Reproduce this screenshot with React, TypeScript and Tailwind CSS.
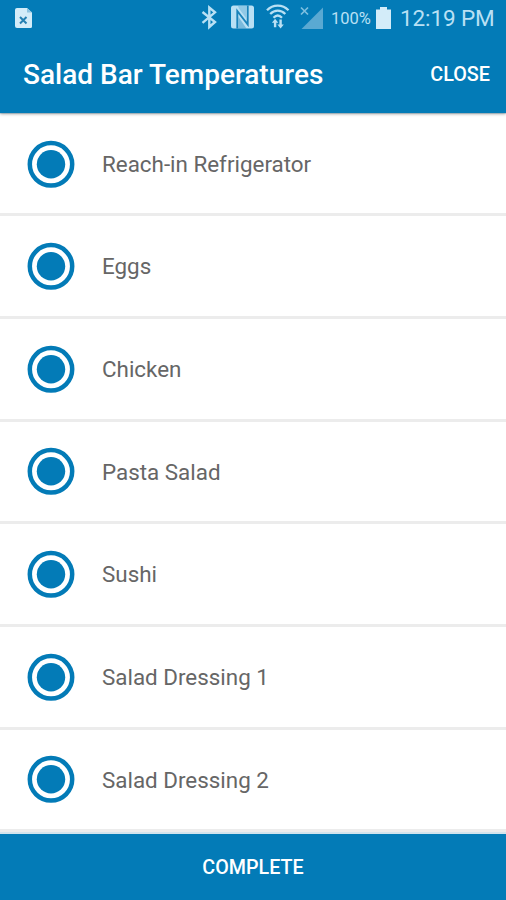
const items = [
  'Reach-in Refrigerator',
  'Eggs',
  'Chicken',
  'Pasta Salad',
  'Sushi',
  'Salad Dressing 1',
  'Salad Dressing 2',
];

function FileErrorIcon() {
  return (
    <svg width="17" height="20" viewBox="0 0 17 20" className="shrink-0">
      <path d="M2 0h10l5 4.500V18.500a1.500 1.500 0 0 1-1.500 1.500h-13.500a2 2 0 0 1-2-2V2a2 2 0 0 1 2-2z" fill="#d3ecf9" />
      <path d="M12 0v4.500h5z" fill="#8dc4e2" />
      <path d="M5 9l6.500 6.500M11.500 9L5 15.500" stroke="#2480b3" strokeWidth="2" />
    </svg>
  );
}

function StatusIcons() {
  return (
    <svg width="132" height="36" viewBox="192 0 132 36" className="shrink-0" fill="none">
      {/* Bluetooth */}
      <path d="M203.500 12l12.500 10-5.700 5V7.500l5.700 4.800-12.500 10.500" stroke="#b9e0f4" strokeWidth="2.400" />
      {/* NFC */}
      <rect x="232" y="5.500" width="23" height="23" rx="2.500" fill="#b9e0f4" />
      <path d="M238.300 28.500V11L248.700 24.500V5.500" stroke="#1a83ba" strokeWidth="1.900" />
      <path d="M240 8.500l7 9.500v-12h-8z" fill="#1a83ba" fillOpacity="0.250" />
      <path d="M239.500 17l8 11.500h-8z" fill="#1a83ba" fillOpacity="0.400" />
      {/* Wi-Fi */}
      <g stroke="#b9e0f4" strokeWidth="2.300">
        <path d="M268 10.300c6-6.200 15.500-6.200 21.500 0" />
        <path d="M271.200 14c4.500-4.500 10.600-4.500 15.100 0" />
        <path d="M274.500 17.700c2.600-2.600 5.900-2.600 8.500 0" />
      </g>
      <path d="M276.100 18.800l3.200 4h-2v4.500h-2.400v-4.500h-2zM281.600 28.500l-3.200-4h2v-5h2.400v5h2z" fill="#b9e0f4" />
      {/* No signal */}
      <path d="M302 7.500l7 7M309 7.500l-7 7" stroke="#7dbfdf" strokeWidth="1.700" />
      <path d="M324 7.500V29H302.500z" fill="#5aa9d2" />
    </svg>
  );
}

function StatusBar() {
  return (
    <div className="flex h-9 items-center pl-[15px] text-[#b9e0f4]">
      <FileErrorIcon />
      <div className="ml-auto flex h-9 items-center pr-3">
        <StatusIcons />
        <span className="ml-2 w-[41px] pt-[2px] text-[16.500px] whitespace-nowrap">100%</span>
        <svg width="15" height="22" viewBox="0 0 15 22" className="ml-[4px] shrink-0">
          <path d="M4 0h7v2.500h4V22H0V2.500h4z" fill="#d3ecf9" />
        </svg>
        <span className="ml-[9px] w-[94px] pt-px text-[22.500px] tracking-[-0.100px] whitespace-nowrap">12:19 PM</span>
      </div>
    </div>
  );
}

function CheckItem({ label }: { label: string }) {
  return (
    <li className="flex h-[102.640px] items-center border-b-[3px] border-[#ececec] bg-white pl-[27px]">
      <svg width="48" height="48" viewBox="0 0 48 48" className="shrink-0">
        <circle cx="24" cy="24.300" r="21.200" fill="none" stroke="#037bb7" strokeWidth="4.500" />
        <circle cx="24" cy="24.300" r="14.200" fill="#037bb7" />
      </svg>
      <span className="ml-[27px] pt-[2px] text-[22.400px] text-[#666666]">{label}</span>
    </li>
  );
}

function App() {
  return (
    <div className="flex h-[900px] w-[506px] flex-col overflow-hidden bg-white font-['Roboto',sans-serif]">
      <header className="relative h-[113px] shrink-0 bg-[#037bb7] shadow-[0_1px_3px_rgba(0,0,0,0.35)]">
        <StatusBar />
        <div className="flex h-[77px] items-center justify-between pr-4 pl-[23px] text-white">
          <h1 className="pt-px text-[28px] font-medium">Salad Bar Temperatures</h1>
          <button className="text-[19.800px] font-medium">CLOSE</button>
        </div>
      </header>

      <ul className="h-[721px] shrink-0 overflow-hidden bg-[#d3e3ec] pt-[0.800px]">
        {items.map((item) => (
          <CheckItem key={item} label={item} />
        ))}
      </ul>

      <button className="h-[66px] shrink-0 bg-[#037bb7] pt-px text-[19.700px] font-medium text-white">
        COMPLETE
      </button>
    </div>
  );
}

export default App;
